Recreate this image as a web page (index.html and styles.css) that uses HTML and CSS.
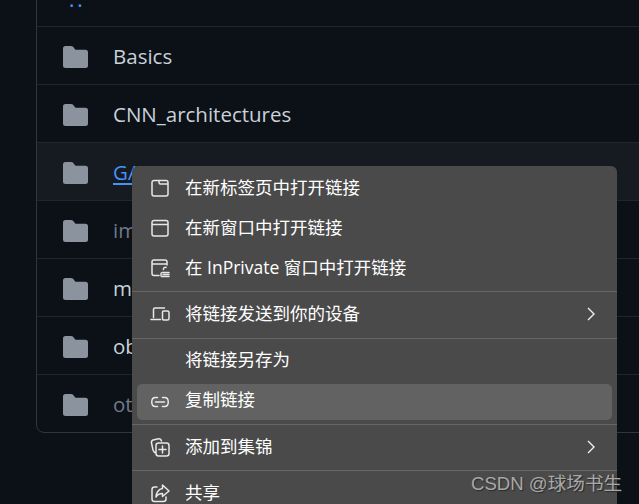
FILE: index.html
```html
<!DOCTYPE html>
<html lang="zh-CN">
<head>
<meta charset="utf-8">
<title>Context menu</title>
<link rel="stylesheet" href="styles.css">
</head>
<body>
<svg class="defs" width="0" height="0" aria-hidden="true">
  <symbol id="folder" viewBox="0 0 25 22"><path d="M2.500 0H8c1 0 1.700.4 2.300 1.100L12 3.200c.3.400.7.600 1.200.6H22.500A2.500 2.500 0 0 1 25 6.300V19.500A2.500 2.500 0 0 1 22.500 22H2.500A2.500 2.500 0 0 1 0 19.500V2.500A2.500 2.500 0 0 1 2.500 0Z"/></symbol>
</svg>
<main class="list">
  <div class="row up"><span class="dots">..</span></div>
  <div class="row"><svg class="folder"><use href="#folder"/></svg><a class="name">Basics</a></div>
  <div class="row"><svg class="folder"><use href="#folder"/></svg><a class="name">CNN_architectures</a></div>
  <div class="row hover"><svg class="folder"><use href="#folder"/></svg><a class="name link">GAN</a></div>
  <div class="row"><svg class="folder"><use href="#folder"/></svg><a class="name dim">image</a></div>
  <div class="row"><svg class="folder"><use href="#folder"/></svg><a class="name">misc</a></div>
  <div class="row"><svg class="folder"><use href="#folder"/></svg><a class="name">object</a></div>
  <div class="row"><svg class="folder"><use href="#folder"/></svg><a class="name dim">other</a></div>
</main>
<nav class="menu">
  <div class="item">
    <svg class="ico" viewBox="0 0 20 20"><path d="M4 2.500H16A2 2 0 0 1 18 4.500V16A2 2 0 0 1 16 18H4A2 2 0 0 1 2 16V4.500A2 2 0 0 1 4 2.500ZM9 2.500V4.500C9 5.500 9.500 6 10.500 6H18"/></svg>
    <span class="label">在新标签页中打开链接</span>
  </div>
  <div class="item">
    <svg class="ico" viewBox="0 0 20 20"><path d="M4 2.500H16A2 2 0 0 1 18 4.500V16A2 2 0 0 1 16 18H4A2 2 0 0 1 2 16V4.500A2 2 0 0 1 4 2.500ZM2 6.500H18"/></svg>
    <span class="label">在新窗口中打开链接</span>
  </div>
  <div class="item">
    <svg class="ico" viewBox="0 0 20 20"><path d="M9 17.500H4A2 2 0 0 1 2 15.500V4A2 2 0 0 1 4 2H15A2 2 0 0 1 17 4V7M2 6H17M16 9.500C14.500 9 13 10 13.500 11.500M12 14.500H19M12 14.500C10.500 14.500 10.500 18.500 12 18.500H19M19 16.500H13"/></svg>
    <span class="label">在 InPrivate 窗口中打开链接</span>
  </div>
  <hr class="sep">
  <div class="item send">
    <svg class="ico" viewBox="0 0 20 20"><path d="M3.500 13.500V5.500C3.500 4.500 4 4 5 4H14.500M1 15.500H10.500M13.500 7H17.500C18.500 7 19 7.500 19 8.500V14.500C19 15.500 18.500 16 17.500 16H13.500C12.800 16 12.500 15.500 12.500 14.500V8C12.500 7.500 12.800 7 13.500 7Z"/></svg>
    <span class="label">将链接发送到你的设备</span>
    <svg class="chev" viewBox="0 0 8 14"><path d="M1 1L7 7L1 13"/></svg>
  </div>
  <hr class="sep">
  <div class="item save"><span class="noico"></span><span class="label">将链接另存为</span></div>
  <div class="item active">
    <svg class="ico" viewBox="0 0 20 20"><path d="M7.500 5.500H5.500C.5 5.500.5 14.500 5.500 14.500H7.500M12.500 5.500H14.500C19.500 5.500 19.500 14.500 14.500 14.500H12.500M5.500 10H14.500"/></svg>
    <span class="label">复制链接</span>
  </div>
  <hr class="sep">
  <div class="item short">
    <svg class="ico" viewBox="0 0 20 20"><path d="M6 16C4 15.500 3.500 14.500 3 13L1.500 6C1.200 4.500 1.800 3.500 3 3L8.500 1.800C10 1.500 11 2 11.500 4M8.500 6H16.500A2.500 2.500 0 0 1 19 8.500V16.500A2.500 2.500 0 0 1 16.500 19H8.500A2.500 2.500 0 0 1 6 16.500V8.500A2.500 2.500 0 0 1 8.500 6ZM12.500 9V16M9 12.500H16"/></svg>
    <span class="label">添加到集锦</span>
    <svg class="chev" viewBox="0 0 8 14"><path d="M1 1L7 7L1 13"/></svg>
  </div>
  <hr class="sep">
  <div class="item short">
    <svg class="ico" viewBox="0 0 20 20"><path d="M7 4H4.500A2.500 2.500 0 0 0 2 6.500V16A2.500 2.500 0 0 0 4.500 18.500H13.500A2.500 2.500 0 0 0 16 16V14M12.500 2L19 8L12.500 13.500V10.500C9.500 10.500 7.500 11.500 6 14C6 10 8.500 6 12.500 5.500Z"/></svg>
    <span class="label">共享</span>
  </div>
</nav>
<div class="mark">CSDN @球场书生</div>
</body>
</html>
```
FILE: styles.css
```css
* { box-sizing: border-box; }
html, body { height: 100%; }
body {
  margin: 0;
  overflow: hidden;
  background: #0c1017;
  font-family: "Noto Sans", "Noto Sans CJK SC", sans-serif;
}
.defs { position: absolute; }

.list {
  margin: -33px 0 0 36px;
  width: 700px;
  border: 1px solid #30363d;
  border-radius: 8px;
}
.row {
  display: flex;
  align-items: center;
  height: 58px;
  padding-left: 26px;
  border-top: 1px solid #21262d;
}
.row:first-child { border-top: 0; }
.up {
  align-items: flex-end;
  padding: 0 0 19px 32px;
}
.dots {
  color: #4493f8;
  font-size: 20px;
  line-height: 14px;
  letter-spacing: 3px;
}
.hover { background: #161b22; }
.folder { width: 25px; height: 22px; margin-top: 2px; fill: #8b949e; flex: none; }
.name {
  margin-left: 25px;
  font-family: "Open Sans", "Noto Sans", sans-serif;
  font-size: 20.500px;
  color: #c9d1d9;
}
.name.dim { color: #6f7b88; }
.link { color: #4493f8; text-decoration: underline; text-underline-offset: 3px; }

.menu {
  position: absolute;
  left: 132px;
  top: 166px;
  width: 485px;
  height: 338px;
  overflow: hidden;
  padding: 2px 5px;
  background: #4a4a4a;
  border-radius: 6px 6px 0 0;
  color: #fff;
  font-family: "Open Sans", "Noto Sans CJK SC", sans-serif;
  font-size: 17.500px;
}
.item {
  display: flex;
  align-items: center;
  height: 40px;
  padding: 0 17px 0 13px;
  border-radius: 5px;
}
.label {
  white-space: nowrap;
  line-height: 24px;
  padding-bottom: 3px;
}
.send { height: 38px; margin-bottom: 5px; }
.short { height: 38px; margin-bottom: 4px; }
.save { height: 36px; }
.ico {
  width: 20px;
  height: 20px;
  flex: none;
  margin-right: 15px;
  fill: none;
  stroke: #e8e8e8;
  stroke-width: 1.500;
  stroke-linecap: round;
  stroke-linejoin: round;
}
.noico { width: 35px; flex: none; }
.chev {
  width: 8px;
  height: 14px;
  margin-left: auto;
  fill: none;
  stroke: #f0f0f0;
  stroke-width: 1.400;
}
.active {
  height: 36px;
  margin: 6px 0 4px;
  background: #626262;
}
.active .label { padding-bottom: 6px; }
.sep {
  height: 1px;
  margin: 3px -5px;
  border: 0;
  background: #666;
}
.mark {
  position: absolute;
  left: 471px;
  top: 472px;
  font-family: "Liberation Sans", "Noto Sans CJK SC", sans-serif;
  font-size: 18.600px;
  line-height: 24px;
  color: #a8a8a8;
  text-shadow: 1px 1px 1px #2a2a2a;
  white-space: nowrap;
}
```
